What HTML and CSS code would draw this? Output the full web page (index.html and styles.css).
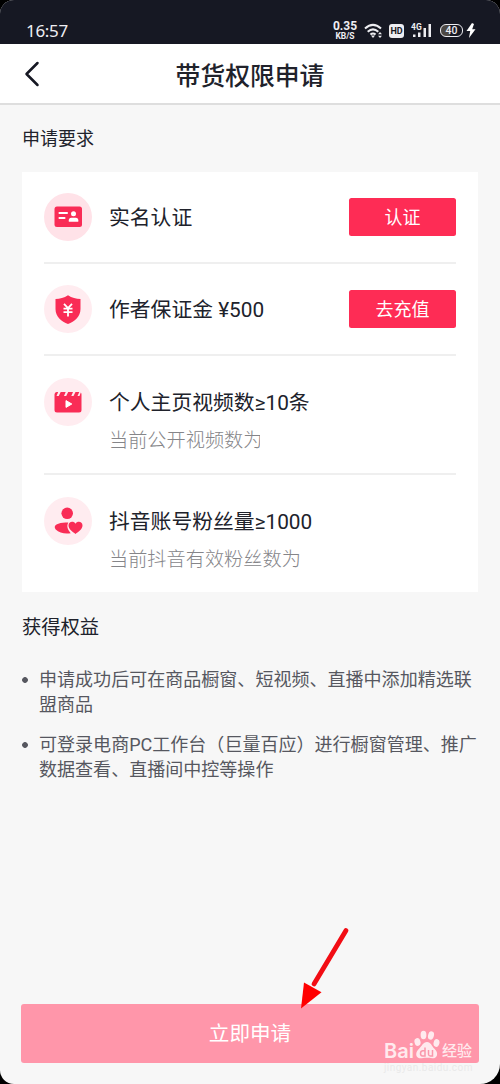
FILE: index.html
```html
<!DOCTYPE html>
<html lang="zh-CN">
<head>
<meta charset="utf-8">
<title>带货权限申请</title>
<link rel="stylesheet" href="styles.css">
</head>
<body>
<div class="screen">
  <div class="status">
    <span class="time">16:57</span>
    <div class="indicators">
      <div class="speed"><b>0.35</b><small>KB/S</small></div>
      <svg class="wifi" width="20" height="16" viewBox="0 0 20 16" fill="none" stroke="#eeeef2" stroke-width="2"><path d="M1 5.600Q9 -1.800 17 5.600M3.700 8.800Q9 4 14.300 8.800M6.400 11.600Q9 9.400 11.600 11.600"/><path d="M7 12.600h4L9 15z" fill="#eeeef2" stroke="none"/><path d="M14 11.300l2-2.300 2 2.300zM14 12.700l2 2.300 2-2.300z" fill="#eeeef2" stroke="none"/></svg>
      <span class="hd">HD</span>
      <div class="signal">
        <span class="gen">4G</span>
        <svg width="21" height="15" viewBox="0 0 21 15" fill="#eeeef2"><path d="M2 11.500h2.500V14H2zM7 9.500h2.500V14H7zM12.500 5H15v9h-2.500zM17.500 1H20v13h-2.500z"/></svg>
      </div>
      <span class="battery">40</span>
      <svg class="bolt" width="10" height="15" viewBox="0 0 10 15" fill="#fff"><path d="M6 0L.5 8h3.700L3 15l6.500-8.800H6.200L8 1z"/></svg>
    </div>
  </div>
  <header class="navbar">
    <svg class="back" width="16" height="26" viewBox="0 0 16 26" fill="none" stroke="#161823" stroke-width="2.500" stroke-linecap="round" stroke-linejoin="round"><path d="M13.500 2L2.500 13l11 11"/></svg>
    <h1>带货权限申请</h1>
  </header>
  <main class="content">
    <h2 class="need">申请要求</h2>
    <section class="card">
      <div class="row first">
        <span class="badge strong"><svg width="48" height="48" viewBox="0 0 48 48"><rect x="10.500" y="13.500" width="27.500" height="20.500" rx="2.500" fill="#f92c56"/><path d="M15.500 20h7.500M15.500 25h5" stroke="#fff" stroke-width="2.100" stroke-linecap="round"/><circle cx="29.500" cy="20.800" r="2.500" fill="#fff"/><path d="M24.800 28.800v-1.500q0-2.600 2.500-2.600h4.500q2.500 0 2.500 2.600v1.500z" fill="#fff"/></svg></span>
        <p class="label">实名认证</p>
        <button class="action">认证</button>
      </div>
      <div class="row second">
        <span class="badge"><svg width="48" height="48" viewBox="0 0 48 48"><path d="M24 10.200c4 2.800 8 3.500 12.500 3.800V24c0 7.500-6 12.500-12.500 15-6.500-2.500-12.500-7.500-12.500-15V14c4.500-.3 8.500-1 12.500-3.800z" fill="#f92c56"/><path d="M20 18.800l4 4.300 4-4.300M19.500 23.600h9M19.500 27.200h9M24 23v8.500" fill="none" stroke="#fff" stroke-width="1.800"/></svg></span>
        <p class="label">作者保证金 ¥500</p>
        <button class="action">去充值</button>
      </div>
      <div class="row detail">
        <span class="badge"><svg width="48" height="48" viewBox="0 0 48 48"><path d="M10.500 17V16.500q0-2.500 2.200-2.500h1.500L12.500 18h2.200l2-4h5L20 18h2.200l2-4h4.800l-1.700 4h2.200l2-4h3.800L33.500 18h2l1.300-3.500q.7.500.7 2V32q0 2.500-2.500 2.500H13q-2.500 0-2.500-2.500z" fill="#f92c56"/><path d="M22 22.600v6.800l5.800-3.400z" fill="#fff" stroke="#fff" stroke-linejoin="round"/></svg></span>
        <div class="text"><p class="label">个人主页视频数≥10条</p><p class="sub clip-short">当前公开视频数为</p></div>
      </div>
      <div class="row detail last">
        <span class="badge"><svg width="48" height="48" viewBox="0 0 48 48" fill="#f92c56"><circle cx="23.200" cy="16.300" r="5.800"/><path d="M24.300 25.600c-2 3.800-.6 7 2.400 10.600-5.500.8-11.500 0-15-3.700q-2.300-2.800.8-4.900c3-1.800 7.200-2.500 11.800-2z"/><path d="M31.500 37c-3-2-7-5-7-8.400 0-4.400 5.300-4.800 7-1.800 1.700-3 7-2.600 7 1.800 0 3.400-4 6.400-7 8.400z"/></svg></span>
        <div class="text"><p class="label">抖音账号粉丝量≥1000</p><p class="sub clip-long">当前抖音有效粉丝数为</p></div>
      </div>
    </section>
    <h2 class="gain">获得权益</h2>
    <ul class="benefits">
      <li>申请成功后可在商品橱窗、短视频、直播中添加精选联<br>盟商品</li>
      <li>可登录电商PC工作台（巨量百应）进行橱窗管理、推广<br>数据查看、直播间中控等操作</li>
    </ul>
  </main>
  <button class="submit">立即申请</button>
  <svg class="arrow" width="60" height="90" viewBox="0 0 60 90"><path d="M51 10.500L19 64" stroke="#f20d14" stroke-width="4.800" stroke-linecap="round"/><path d="M6 88.500L9 62.500l17.500 9.700z" fill="#f00"/></svg>
  <div class="watermark">
    <div class="brand">
      <span class="bai">Bai</span>
      <svg class="paw" width="26" height="30" viewBox="0 0 26 30"><g fill="#fff"><ellipse cx="3.500" cy="12" rx="3" ry="4" transform="rotate(-15 3.500 12)"/><ellipse cx="9.500" cy="5" rx="2.900" ry="4.200"/><ellipse cx="17" cy="5.500" rx="2.900" ry="4.200" transform="rotate(15 17 5.500)"/><ellipse cx="22.500" cy="13" rx="2.900" ry="3.900" transform="rotate(15 22.500 13)"/><path d="M13 12c4 0 4.500 4 7.500 6.700 4.800 4.500 2.500 10-2.300 9.600-3.500-.6-6.900-.6-10.400 0-6.300.5-7.200-5.400-3-9.400C8.200 16 9 12 13 12z"/></g><path d="M11 17.500v8.500H8.500q-2-.2-2-2.500t2-2.700H11M14.500 20v4.500q.2 1.500 2 1.500h2V20" fill="none" stroke="#f998ac" stroke-width="1.500"/></svg>
      <span class="exp">经验</span>
    </div>
    <span class="site">jingyan.baidu.com</span>
  </div>
</div>
</body>
</html>
```
FILE: styles.css
```css
* { box-sizing: border-box; }
body { margin: 0; background: #000; font-family: Roboto, "Noto Sans CJK SC", sans-serif; color: #20222b; }
h1, h2, p, ul { margin: 0; padding: 0; font-weight: 400; }
button { border: 0; padding: 0; font-family: inherit; color: #fff; }
.screen { position: relative; width: 500px; height: 1084px; display: flex; flex-direction: column; background: #f7f7f7; border-radius: 14px 14px 20px 14px; overflow: hidden; }
.status { height: 44px; flex: none; background: #161823; color: #eeeef2; display: flex; justify-content: space-between; padding: 17px 24px 0 26px; }
.time { font: 17px/28px "Noto Sans", sans-serif; letter-spacing: -.3px; }
.indicators { display: flex; align-items: flex-start; }
.speed { width: 24px; display: flex; flex-direction: column; align-items: center; padding-top: 4px; margin-right: 7px; }
.speed b { font: 700 12px/11px Roboto, sans-serif; }
.speed small { font: 700 8.500px/8px Roboto, sans-serif; }
.wifi { margin: 6px 5px 0 0; }
.hd { width: 15px; height: 14px; margin-top: 7px; background: #eeeef2; border-radius: 3px; color: #161823; font: 700 9px/14px Roboto, sans-serif; text-align: center; }
.signal { position: relative; margin: 6px 8px 0 7px; }
.signal svg { display: block; }
.gen { position: absolute; left: 0; top: 0; font: 700 8.500px/9px Roboto, sans-serif; }
.battery { width: 23px; height: 13px; margin: 7px 3px 0 0; border: 1.500px solid #eeeef2; border-radius: 6px; font: 500 10.500px/11px Roboto, sans-serif; text-align: center; background: linear-gradient(90deg, #4c4844 45%, #161823 45%); }
.bolt { margin-top: 6px; }
.navbar { height: 61px; flex: none; background: #fff; border-bottom: 2px solid #dedede; display: grid; grid-template-columns: 60px 1fr 60px; align-items: center; }
.back { margin-left: 24px; }
.navbar h1 { font-size: 24.800px; line-height: 36px; font-weight: 500; text-align: center; padding-top: 6px; }
.content { padding: 19px 22px 0; flex: 1; }
.need { font-size: 18px; line-height: 30px; }
.card { margin-top: 18px; height: 420px; padding: 0 22px; background: #fff; }
.row { display: flex; align-items: center; border-bottom: 2px solid #efefef; }
.first { height: 92px; }
.second { height: 92px; }
.detail { height: 119px; align-items: flex-start; padding-top: 22px; }
.last { height: 117px; border-bottom: 0; }
.badge { width: 48px; height: 48px; flex: none; border-radius: 50%; background: #ffecf0; margin-right: 17px; }
.badge.strong { background: #ffe2e8; }
.badge svg { display: block; }
.label { padding-top: 2px; font-size: 20.800px; line-height: 30px; white-space: nowrap; }
.text { padding-top: 8px; }
.sub { margin-top: 8px; font-size: 19.200px; line-height: 30px; color: #858589; font-weight: 300; white-space: nowrap; overflow: hidden; }
.clip-short { width: 151px; }
.clip-long { width: 192px; }
.action { width: 107px; height: 38px; margin-left: auto; border-radius: 2.500px; background: #fe2c55; font-size: 18px; line-height: 38px; padding-top: 1px; }
.gain { margin-top: 21px; font-size: 19.300px; line-height: 30px; }
.benefits { list-style: none; margin-top: 24px; font-size: 18.050px; line-height: 25px; color: #56575f; display: flex; flex-direction: column; gap: 15px; }
.benefits li { padding-left: 17px; white-space: nowrap; background: radial-gradient(circle at 3px 13px, #56575f 2.500px, transparent 3.200px); }
.submit { flex: none; height: 59px; margin: 0 21px 21px; border-radius: 3px; background: #ff96aa; font-size: 20.600px; line-height: 59px; padding-top: 1px; }
.arrow { position: absolute; left: 295px; top: 920px; }
.watermark { position: absolute; left: 384px; top: 1030px; width: 95px; color: #fff; opacity: .8; }
.brand { display: flex; height: 32px; }
.bai { width: 30px; font: 600 20px/42px Inter, sans-serif; }
.paw { margin-right: 2px; }
.exp { font-size: 15px; line-height: 43px; font-weight: 500; }
.site { display: block; font: 10px/12px Roboto, sans-serif; letter-spacing: .45px; color: #e6e6e6; white-space: nowrap; }
```
